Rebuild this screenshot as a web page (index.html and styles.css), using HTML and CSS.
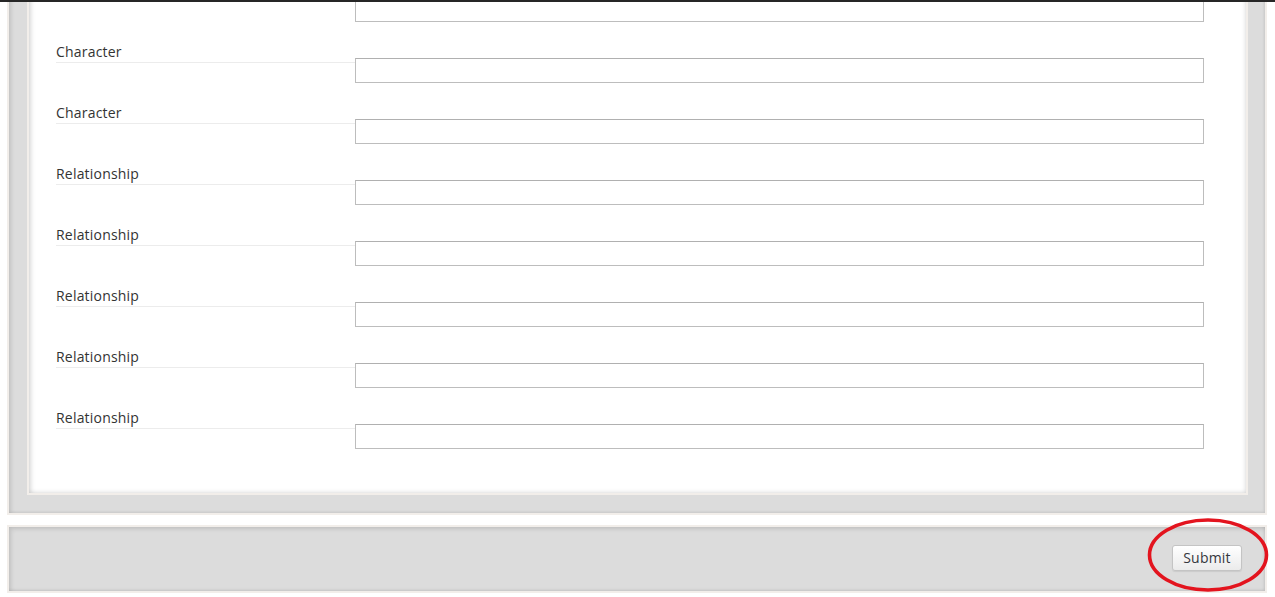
FILE: index.html
```html
<!DOCTYPE html>
<html>
<head>
<meta charset="utf-8">
<link rel="stylesheet" href="styles.css">
</head>
<body>
<div class="topbar"></div>
<div class="outer">
  <div class="inner">
    <div class="row"><label class="lbl">&nbsp;</label><input class="field" type="text"></div>
    <div class="row"><label class="lbl">Character</label><input class="field" type="text"></div>
    <div class="row"><label class="lbl">Character</label><input class="field" type="text"></div>
    <div class="row"><label class="lbl">Relationship</label><input class="field" type="text"></div>
    <div class="row"><label class="lbl">Relationship</label><input class="field" type="text"></div>
    <div class="row"><label class="lbl">Relationship</label><input class="field" type="text"></div>
    <div class="row"><label class="lbl">Relationship</label><input class="field" type="text"></div>
    <div class="row"><label class="lbl">Relationship</label><input class="field" type="text"></div>
  </div>
</div>
<div class="footer">
  <button class="submit" type="button">Submit</button>
  <svg class="circle" width="124" height="78" viewBox="0 0 124 78"><ellipse cx="61" cy="37" rx="58.5" ry="35" fill="none" stroke="#e3141e" stroke-width="3.6"/></svg>
</div>
</body>
</html>
```
FILE: styles.css
```css
html, body {
  margin: 0;
  padding: 0;
  background: #ffffff;
  overflow: hidden;
}
body {
  font-family: "Open Sans", "DejaVu Sans", sans-serif;
  width: 1275px;
  height: 597px;
  position: relative;
}
.topbar {
  position: absolute;
  top: 0;
  left: 0;
  right: 0;
  height: 2px;
  background: #262626;
  z-index: 5;
}
.outer {
  margin: -100px 8px 0 7px;
  border: 2px solid #f2eeea;
  background: #dcdcdc;
  padding: 18px 17px 18px 18px;
  box-shadow: inset 2px 2px 4px rgba(0,0,0,0.12), inset -1px -1px 3px rgba(0,0,0,0.08);
}
.inner {
  border: 2px solid #f2eeea;
  background: #ffffff;
  padding: 61px 20px 44px 27px;
  box-shadow: inset 2px 2px 5px rgba(0,0,0,0.14), inset -1px -1px 4px rgba(0,0,0,0.1);
  display: flex;
  flex-direction: column;
  gap: 22px;
}
.row {
  display: flex;
  align-items: flex-start;
}
.lbl {
  width: 299px;
  height: 18px;
  font-size: 14px;
  letter-spacing: 0.2px;
  line-height: 16px;
  color: #333333;
  border-bottom: 1px solid #ececec;
  box-sizing: content-box;
  white-space: nowrap;
}
.field {
  margin: 14px 0 0 0;
  width: 849px;
  height: 25px;
  box-sizing: border-box;
  border: 1px solid #bdbdbd;
  border-top-color: #b0b0b0;
  background: #ffffff;
  padding: 0 4px;
  font-family: inherit;
  outline: none;
}
.footer {
  position: relative;
  margin: 10px 8px 0 7px;
  height: 64px;
  border: 2px solid #f2eeea;
  background: #dcdcdc;
  box-shadow: inset 2px 2px 4px rgba(0,0,0,0.12), inset -1px -1px 3px rgba(0,0,0,0.1);
  display: flex;
  justify-content: flex-end;
  align-items: center;
  padding-right: 23px;
}
.submit {
  width: 70px;
  height: 26px;
  margin-top: -3px;
  border: 1px solid #c4c4c4;
  border-radius: 3px;
  background: linear-gradient(#ffffff, #ebebeb);
  font-family: "Open Sans", "DejaVu Sans", sans-serif;
  font-size: 14px;
  letter-spacing: 0.2px;
  color: #34373d;
  padding: 0;
  box-shadow: 0 1px 1px rgba(0,0,0,0.08);
}
.circle {
  position: absolute;
  left: 1138px;
  top: -9px;
  pointer-events: none;
}
```
